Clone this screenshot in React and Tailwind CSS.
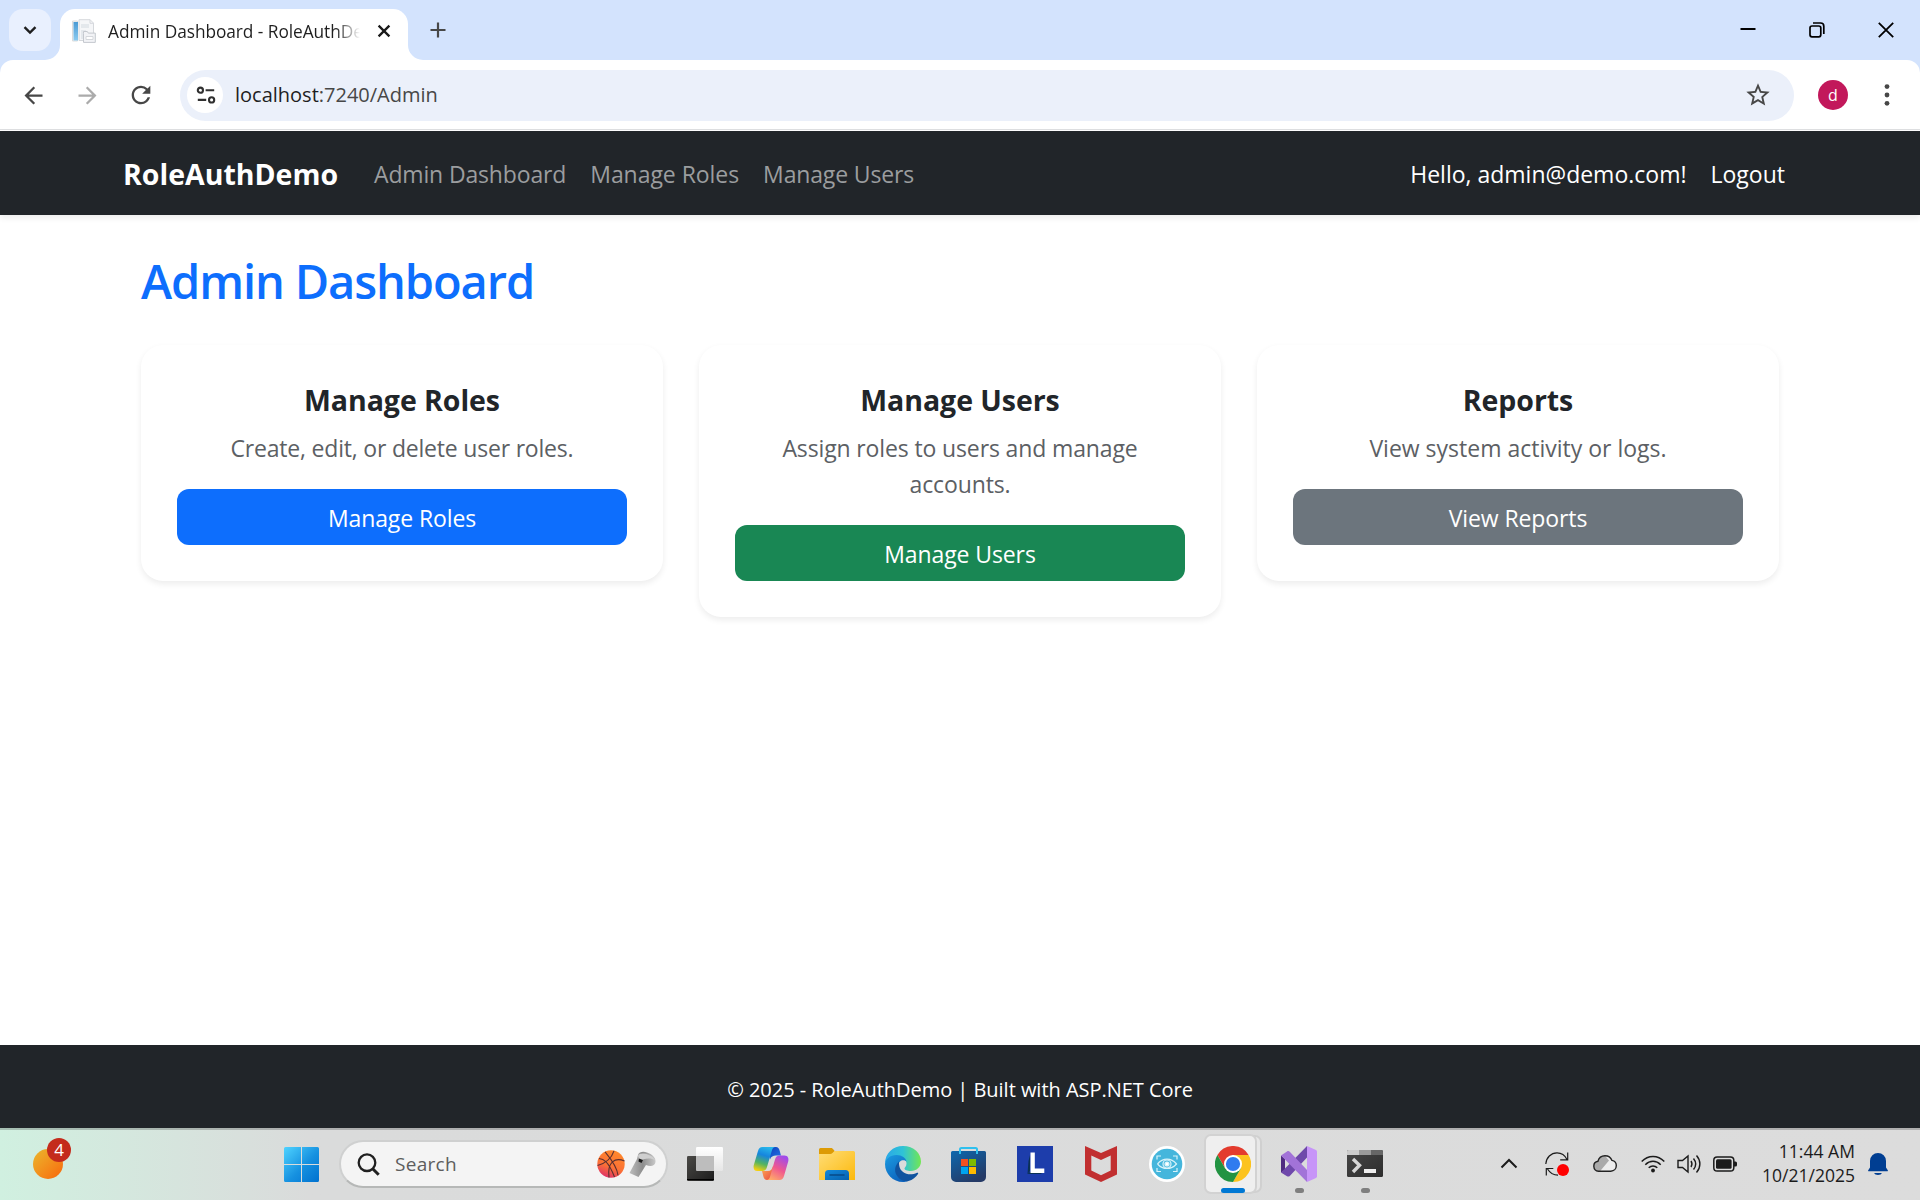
import { MdArrowBack, MdArrowForward, MdRefresh, MdStarBorder } from "react-icons/md";

function TabStrip() {
  return (
    <div className="flex h-[60px] shrink-0 items-start pl-[9px] pt-[9px]">
      <button className="flex size-[42px] items-center justify-center rounded-[14px] bg-[#e9f0fe]">
        <svg className="size-[14px]" viewBox="0 0 14 14" fill="none" stroke="#1f1f1f" strokeWidth="2.4">
          <path d="M1.5 4.2 7 9.5l5.5-5.3" />
        </svg>
      </button>
      <div className="relative ml-[9px] flex h-[51px] w-[348px] items-center rounded-t-[15px] bg-white pb-[8px] pl-[12px]">
        <svg className="absolute -left-[15px] bottom-0 size-[15px]" viewBox="0 0 15 15">
          <path d="M15 0v15H0A15 15 0 0 0 15 0" fill="#fff" />
        </svg>
        <svg className="absolute -right-[15px] bottom-0 size-[15px]" viewBox="0 0 15 15">
          <path d="M0 0v15h15A15 15 0 0 1 0 0" fill="#fff" />
        </svg>
        <Favicon />
        <span className="ml-[12px] w-[253px] overflow-hidden whitespace-nowrap bg-linear-to-r from-[#1f1f1f] from-[228px] to-transparent to-[252px] bg-clip-text pt-[3px] text-[17.3px] tracking-[-0.05px] text-transparent">
          Admin Dashboard - RoleAuthDe
        </span>
        <svg className="ml-[16px] size-[14px]" viewBox="0 0 14 14" stroke="#1a1a1a" strokeWidth="2.3">
          <path d="M1.6 1.6l10.8 10.8M12.4 1.6 1.6 12.4" />
        </svg>
      </div>
      <svg className="ml-[22px] mt-[13px] size-4" viewBox="0 0 16 16" stroke="#474747" strokeWidth="2.2">
        <path d="M8 .5v15M.5 8h15" />
      </svg>
      <div className="ml-auto mr-[26px] mt-[13px] flex items-center gap-[53px]">
        <svg className="size-4" viewBox="0 0 16 16" stroke="#000" strokeWidth="2">
          <path d="M.5 7h15" />
        </svg>
        <svg className="size-4" viewBox="0 0 16 16" fill="none" stroke="#000" strokeWidth="1.7">
          <rect x="1" y="4" width="10.800" height="10.800" rx="2" />
          <path d="M4 1h7.600a3.200 3.200 0 0 1 3.200 3.200V12" />
        </svg>
        <svg className="size-4" viewBox="0 0 16 16" stroke="#000" strokeWidth="1.8">
          <path d="M.8.8l14.400 14.400M15.200.8.8 15.200" />
        </svg>
      </div>
    </div>
  );
}

function Favicon() {
  return (
    <svg className="size-6 shrink-0" viewBox="0 0 24 24">
      <defs>
        <linearGradient id="fav" x1="0" y1="0" x2="0" y2="1">
          <stop offset="0" stopColor="#4a9ad4" />
          <stop offset="1" stopColor="#8ccbf0" />
        </linearGradient>
      </defs>
      <path d="M.5 2h5v20h-5z" fill="#f4f4f4" stroke="#dcdcdc" />
      <path d="M1.500 3h4.500V21.500h-4.500z" fill="url(#fav)" />
      <path d="M7 .7h11.100l3.400 3.400v17.400H7z" fill="#f5f6f8" stroke="#d5d8dc" />
      <path d="M18 .7v3.600h3.500" fill="none" stroke="#d5d8dc" />
      <path d="M9 5h8v4H9zM9 11h5v9H9z" fill="#e4e8ec" />
      <path d="M11.500 14.500v-2h3.800l1 1.600h7v9.300H11.500z" fill="#f2f3f6" stroke="#c4c8ce" />
      <path d="M14 17.500h7v3h-7z" fill="#fff" stroke="#d5d8dc" />
    </svg>
  );
}

function Toolbar() {
  return (
    <div className="flex h-[71px] shrink-0 items-center rounded-t-[13px] border-b border-b-white bg-white shadow-[inset_0_-1px_0_#dedfe1]">
      <MdArrowBack className="ml-[20px] size-[27px] text-[#474747]" />
      <MdArrowForward className="ml-[27px] size-[27px] text-[#ababab]" />
      <MdRefresh className="ml-[26px] size-[28px] text-[#474747]" />
      <div className="ml-[25px] flex h-[51px] w-[1614px] items-center rounded-full bg-[#ebf0fa] pl-[7px]">
        <span className="flex size-9 items-center justify-center rounded-full bg-white pl-px">
          <svg className="size-[20px]" viewBox="0 0 20 20" fill="none" stroke="#303030" strokeWidth="2.1">
            <circle cx="4.4" cy="5.2" r="2.6" />
            <path d="M9.600 5.200h8.600M1.800 14.900h8.400" />
            <circle cx="15.6" cy="14.9" r="2.6" />
          </svg>
        </span>
        <span className="ml-[12px] text-[20px] leading-6 text-[#474747]">
          <span className="text-[#1f1f1f]">localhost</span>:7240/Admin
        </span>
        <MdStarBorder className="ml-auto mr-[22px] size-[28px] text-[#474747]" />
      </div>
      <span className="ml-[24px] flex size-[30px] items-center justify-center rounded-full bg-[#c2185b] pb-[1px] text-[16px] text-white">
        d
      </span>
      <svg className="ml-[36px] h-6 w-[6px]" viewBox="0 0 6 24" fill="#474747">
        <circle cx="3" cy="3.6" r="2.4" />
        <circle cx="3" cy="12" r="2.4" />
        <circle cx="3" cy="20.3" r="2.4" />
      </svg>
    </div>
  );
}

function Navbar() {
  return (
    <nav className="z-10 flex h-[84px] shrink-0 items-center bg-[#212529] pl-[123px] pr-[135px] pt-[3px] text-[23px] text-white shadow-[0_3px_6px_rgba(0,0,0,0.075)]">
      <span className="w-[251px] text-[28.5px] font-bold">RoleAuthDemo</span>
      <div className="flex gap-6 text-[#9b9d9f]">
        <a className="tracking-[-0.15px]">Admin Dashboard</a>
        <a className="tracking-[-0.05px]">Manage Roles</a>
        <a className="tracking-[-0.15px]">Manage Users</a>
      </div>
      <div className="ml-auto flex gap-6">
        <span>Hello, admin@demo.com!</span>
        <a>Logout</a>
      </div>
    </nav>
  );
}

function Card({ title, text, textClass = "tracking-[-0.2px]", action, color }) {
  return (
    <div className="rounded-[22px] bg-white p-9 text-center text-[#212529] shadow-[0_3px_6px_rgba(0,0,0,0.075)]">
      <h5 className="mb-3 h-9 pt-[1px] text-[28.5px] font-bold leading-9 tracking-[-0.05px]">{title}</h5>
      <p className={`relative top-px mb-6 text-[23px] leading-9 text-[#5c6064] ${textClass}`}>{text}</p>
      <button className={`block h-14 w-full rounded-[12px] pt-[2px] text-[23px] leading-[54px] tracking-[-0.1px] text-white ${color}`}>
        {action}
      </button>
    </div>
  );
}

function Dashboard() {
  return (
    <main className="flex-1 px-[141px] pt-[36px]">
      <h1 className="mb-[36px] h-[58px] text-[47px] font-semibold leading-[60px] tracking-[-1.1px] text-[#0d6efd]">Admin Dashboard</h1>
      <div className="grid grid-cols-3 items-start gap-9">
        <Card title="Manage Roles" text="Create, edit, or delete user roles." action="Manage Roles" color="bg-[#0d6efd]" />
        <Card
          title="Manage Users"
          text="Assign roles to users and manage accounts."
          textClass="tracking-[-0.13px]"
          action="Manage Users"
          color="bg-[#198754]"
        />
        <Card title="Reports" text="View system activity or logs." textClass="tracking-normal" action="View Reports" color="bg-[#6c757d]" />
      </div>
    </main>
  );
}

function Start() {
  return (
    <svg className="size-[35px]" viewBox="0 0 35 35">
      <defs>
        <linearGradient id="win" x1="0" y1="0" x2="1" y2="1">
          <stop offset="0" stopColor="#4fd3ff" />
          <stop offset=".55" stopColor="#1691e0" />
          <stop offset="1" stopColor="#0071cf" />
        </linearGradient>
      </defs>
      <path d="M1.500 0H17v17H0V1.500A1.500 1.500 0 0 1 1.500 0M18 0h15.500A1.500 1.500 0 0 1 35 1.500V17H18zM0 18h17v17H1.500A1.500 1.500 0 0 1 0 33.500zM18 18h17v15.500a1.500 1.500 0 0 1-1.500 1.500H18z" fill="url(#win)" />
    </svg>
  );
}

function TaskView() {
  return (
    <svg className="size-9" viewBox="0 0 36 36">
      <defs>
        <linearGradient id="tvd" x1="0" y1="0" x2="1" y2="1">
          <stop offset="0" stopColor="#4a4946" />
          <stop offset="1" stopColor="#1c1c1c" />
        </linearGradient>
        <linearGradient id="tvl" x1="0" y1="0" x2="0" y2="1">
          <stop offset="0" stopColor="#fff" />
          <stop offset="1" stopColor="#e6e6e6" />
        </linearGradient>
      </defs>
      <rect x="9" y="1" width="27" height="24" rx="1.3" fill="url(#tvl)" />
      <rect x="0" y="10" width="27" height="25" rx="1.3" fill="url(#tvd)" />
      <path d="M9 10h18v15H10a1 1 0 0 1-1-1z" fill="#bdbdbd" />
      <path d="M0 33.500h27" stroke="#000" />
    </svg>
  );
}

function Copilot() {
  return (
    <svg className="size-9" viewBox="0 0 36 36">
      <defs>
        <linearGradient id="cpa" x1=".6" y1="0" x2=".3" y2="1">
          <stop offset="0" stopColor="#27b6ea" />
          <stop offset=".35" stopColor="#1685de" />
          <stop offset=".7" stopColor="#54b461" />
          <stop offset="1" stopColor="#f3cf10" />
        </linearGradient>
        <linearGradient id="cpb" x1=".7" y1="0" x2=".2" y2="1">
          <stop offset="0" stopColor="#a04bea" />
          <stop offset=".5" stopColor="#f0588f" />
          <stop offset="1" stopColor="#ffae67" />
        </linearGradient>
        <linearGradient id="cpc" x1="0" y1="0" x2="1" y2="1">
          <stop offset="0" stopColor="#0c3cba" />
          <stop offset="1" stopColor="#2577e8" />
        </linearGradient>
        <linearGradient id="cpd" x1="0" y1="0" x2="1" y2="1">
          <stop offset="0" stopColor="#ffb055" />
          <stop offset="1" stopColor="#e64040" />
        </linearGradient>
      </defs>
      <path d="M15 1h8c2 0 3 1.500 3.600 3.500L28 9.500h-5c-3 0-5 1-6 4z" fill="url(#cpc)" />
      <path d="M9 25h6c3 0 4-2 5-5l2 5-3.500 9H14c-2 0-3-1.500-3.600-3.500z" fill="url(#cpd)" />
      <path d="M9.500 1h13c-2 0-3 1.500-3.600 3.500L14 21c-.8 2.500-2 4-5 4H4.500C1 25 0 22 .8 19L5 5c.8-2.500 2-4 4.500-4" fill="url(#cpa)" />
      <path d="M26.500 34h-13c2 0 3-1.500 3.600-3.500L22 13.500c.8-2.500 2-4 5-4h4.500C35 9.500 36 12.500 35.200 15.500L31 30c-.8 2.500-2 4-4.500 4" fill="url(#cpb)" />
    </svg>
  );
}

function Explorer() {
  return (
    <svg className="size-9" viewBox="0 0 36 36">
      <defs>
        <linearGradient id="exf" x1="0" y1="0" x2="1" y2="1">
          <stop offset="0" stopColor="#ffdd77" />
          <stop offset="1" stopColor="#fcb90c" />
        </linearGradient>
        <linearGradient id="exb" x1="0" y1="0" x2="1" y2="1">
          <stop offset="0" stopColor="#1389dc" />
          <stop offset="1" stopColor="#0560ad" />
        </linearGradient>
      </defs>
      <path d="M0 3.500A1.500 1.500 0 0 1 1.500 2H12c1 0 1.500.5 2 1l2 2.500L12 9H0z" fill="#dd9b05" />
      <path d="M0 8h10c2 0 3-.5 4-1.500L15.500 5h19A1.500 1.500 0 0 1 36 6.500V34H0z" fill="url(#exf)" />
      <path d="M6 34v-6.500A3.500 3.500 0 0 1 9.500 24h17a3.500 3.500 0 0 1 3.500 3.500V34z" fill="url(#exb)" />
      <path d="M11 29h14" stroke="#074a87" strokeWidth="1.5" strokeLinecap="round" />
    </svg>
  );
}

function Edge() {
  return (
    <svg className="size-9" viewBox="0 0 36 36">
      <defs>
        <linearGradient id="edt" x1="0" y1=".5" x2="1" y2=".5">
          <stop offset="0" stopColor="#2aa7e8" />
          <stop offset=".5" stopColor="#2fc3d6" />
          <stop offset="1" stopColor="#72e753" />
        </linearGradient>
        <linearGradient id="edb" x1="0" y1="0" x2=".6" y2="1">
          <stop offset="0" stopColor="#1b9be0" />
          <stop offset="1" stopColor="#0d63bd" />
        </linearGradient>
      </defs>
      <path d="M0 18C0 7 8 0 18 0c11 0 18 7.500 18 15.500C36 21 31.500 25 26 25c-4 0-6.500-1-6.500-2.500 0-1 2-2 2-5 0-4-4-7.500-9-7.500C5.500 10 1 14 0 18" fill="url(#edt)" />
      <path d="M0 18c.5-5 5-9 11.500-9 5.500 0 9.500 3 10 6.500-2-2-5-1.500-6.500 0-3 3-3 8-1 12 2 3.500 5.500 6 9 7.500-2 .7-3.500 1-5 1C8 36 0 28 0 18" fill="url(#edb)" />
      <path d="M14 15.500c-4 4-5 9-2.500 13.500C14 33.500 19 36 23.500 35c4-1 7.500-4 9.500-7 .6-1-.2-1.700-1-1.200C24 30.500 15.500 27 14.300 20c-.3-1.500-.3-3-.3-4.500" fill="#10539f" />
    </svg>
  );
}

function Store() {
  return (
    <svg className="size-9" viewBox="0 0 36 36">
      <defs>
        <linearGradient id="sto" x1="0" y1="0" x2=".6" y2="1">
          <stop offset="0" stopColor="#0d68ae" />
          <stop offset="1" stopColor="#253a66" />
        </linearGradient>
      </defs>
      <path d="M0 6.500A1.500 1.500 0 0 1 1.500 5h32A1.500 1.500 0 0 1 35 6.500V31a5 5 0 0 1-5 5H5a5 5 0 0 1-5-5z" fill="url(#sto)" />
      <path d="M9 8V3a1.300 1.300 0 0 1 1.300-1.100h14.400A1.300 1.300 0 0 1 26 3v5" fill="none" stroke="#2fc0ee" strokeWidth="2" />
      <path d="M10 13h7v7h-7z" fill="#f25022" />
      <path d="M18 13h7v7h-7z" fill="#7fba00" />
      <path d="M10 21h7v7h-7z" fill="#00a4ef" />
      <path d="M18 21h7v7h-7z" fill="#ffb900" />
    </svg>
  );
}

function LApp() {
  return (
    <svg className="size-9" viewBox="0 0 36 36">
      <path d="M0 0h36v36H0z" fill="#1d3dab" />
      <path d="M13 9v16l-2.500 3L11.500 15zM10.500 28h13L27 26H13z" fill="#0a3155" />
      <path d="M13.500 6.500h4.300v16h9.500V27H13.500z" fill="#fff" />
    </svg>
  );
}

function McAfee() {
  return (
    <svg className="size-9" viewBox="0 0 36 36">
      <path fillRule="evenodd" d="M2 0l16 7L34 0v28.500L18 36 2 28.500zM8.300 9.500V24.500L18 29.300l9.700-4.800v-15L18 14z" fill="#c12f30" />
    </svg>
  );
}

function EyeApp() {
  return (
    <svg className="size-9" viewBox="0 0 36 36" fill="none" stroke="#d8f3fa" strokeWidth="1.2">
      <circle cx="18" cy="18" r="18" fill="#fff" stroke="none" />
      <circle cx="18" cy="18" r="15.3" fill="#45b6dc" stroke="none" />
      <path d="M8 13.500V10h4M24 10h4v3.500M28 22v3.500h-4M12 25.500H8V22" />
      <path d="M8.500 18c5.500-6.500 13.500-6.500 19 0-5.500 6-13.500 6-19 0" />
      <circle cx="18" cy="18" r="4" />
      <circle cx="18" cy="18" r="2" fill="#fff" />
    </svg>
  );
}

function Chrome() {
  return (
    <svg className="size-9" viewBox="0 0 36 36">
      <path d="M2.400 9A18 18 0 0 1 33.600 9H18l-7.800 13.500z" fill="#e33b2e" />
      <path d="M33.600 9A18 18 0 0 1 18 36l7.800-13.500L18 9z" fill="#fcc31e" />
      <path d="M2.400 9A18 18 0 0 0 18 36l7.800-13.500H10.200z" fill="#229342" />
      <circle cx="18" cy="18" r="9" fill="#fff" />
      <circle cx="18" cy="18" r="7.1" fill="#2f7bef" />
    </svg>
  );
}

function VisualStudio() {
  return (
    <svg className="size-9" viewBox="0 0 36 36">
      <path d="M0 9.500L4 13v11L0 26.500z" fill="#4f2b80" />
      <path d="M0 26.500L4 22.500 26 0v11.500L9 29.700c-1 1-2 1.200-3 .5z" fill="#6f49ab" />
      <path d="M0 9.500L6 5.500c1-.7 2-.5 3 .5l17 18v12L4 13.500z" fill="#a273d8" />
      <path d="M26 0l9 4c.7.400 1 1 1 1.800v24.400c0 .8-.3 1.400-1 1.800l-9 4z" fill="#c795f8" />
    </svg>
  );
}

function Terminal() {
  return (
    <svg className="size-9" viewBox="0 0 36 36">
      <defs>
        <linearGradient id="trm" x1="0" y1="0" x2="1" y2="1">
          <stop offset="0" stopColor="#474747" />
          <stop offset="1" stopColor="#2d2d2d" />
        </linearGradient>
      </defs>
      <rect y="4" width="36" height="27" rx="1.5" fill="url(#trm)" />
      <path d="M1.500 4H12v5H0V5.500A1.500 1.500 0 0 1 1.500 4" fill="#cbcbcb" />
      <path d="M12 4h12v5H12z" fill="#9a9a9a" />
      <path d="M24 4h10.500A1.500 1.500 0 0 1 36 5.500V9H24z" fill="#666" />
      <path d="M6 13l6.500 6.300L6 26" fill="none" stroke="#d6d6d6" strokeWidth="3.4" />
      <path d="M17 23h12v4H17z" fill="#eee" />
    </svg>
  );
}

const apps = [
  { Icon: TaskView }, { Icon: Copilot }, { Icon: Explorer }, { Icon: Edge }, { Icon: Store }, { Icon: LApp }, { Icon: McAfee }, { Icon: EyeApp },
  { Icon: Chrome, active: true }, { Icon: VisualStudio, running: true }, { Icon: Terminal, running: true },
];

function AppButton({ Icon, active, running }) {
  return (
    <div className="relative flex h-full w-[66px] items-center justify-center">
      {active && <span className="absolute left-[10px] top-[5px] h-[58px] w-[52px] rounded-[7px] border-2 border-[#d0d0d0] bg-[#e8e8e8]" />}
      {active && <span className="absolute left-[4px] top-[4px] h-[60px] w-[53px] rounded-[7px] border-2 border-[#d2d2d2] bg-[#efefef]" />}
      <span className="relative"><Icon /></span>
      {active && <span className="absolute bottom-[5px] left-[21px] h-[5px] w-6 rounded-full bg-[#0078d4]" />}
      {running && <span className="absolute bottom-[5px] left-[29px] h-[5px] w-[9px] rounded-full bg-[#7f7f7f]" />}
    </div>
  );
}

function Weather() {
  return (
    <div className="w-[268px] pl-[33px]">
      <div className="relative size-[30px] rounded-full bg-linear-to-br from-[#e9b62c] to-[#f7650a]">
        <span className="absolute -top-[11px] left-[14px] flex size-6 items-center justify-center rounded-full bg-[#c42b1c] text-[17px] text-white">4</span>
      </div>
    </div>
  );
}

function SearchBox() {
  return (
    <div className="ml-[5px] mr-[4px] flex h-[48px] w-[329px] items-center rounded-full border-2 border-[#cfd0d0] border-b-[#b6b8b7] bg-[#f4f4f4] pl-[16px] pr-[10px]">
      <svg className="size-[23px]" viewBox="0 0 23 23" fill="none" stroke="#202020" strokeWidth="2.3">
        <circle cx="10" cy="9.7" r="8.3" />
        <path d="M15.700 15.700l6 6" strokeWidth="3" />
      </svg>
      <span className="ml-[15px] text-[19px] tracking-[0.3px] text-[#5d5d5d]">Search</span>
      <svg className="ml-auto size-[28px]" viewBox="0 0 28 28" fill="none" stroke="#5c3030" strokeWidth="1.1">
        <defs>
          <linearGradient id="bsk" x1=".7" y1="0" x2=".3" y2="1">
            <stop offset="0" stopColor="#ff8a2b" />
            <stop offset=".6" stopColor="#fb7036" />
            <stop offset="1" stopColor="#dd2f6b" />
          </linearGradient>
        </defs>
        <circle cx="14" cy="14" r="13.7" fill="url(#bsk)" stroke="none" />
        <path d="M8 1.800c5 6 12 14 13 23.500M2 8.500c4 .5 9 1.500 15.500 18.500M.5 15.500C9 13 15 7 17 .8M27.500 11C18 7 10 12 12 27.500" />
      </svg>
      <svg className="ml-[4px] size-[27px]" viewBox="0 0 27 27">
        <defs>
          <linearGradient id="whi" x1="0" y1="0" x2="1" y2="0">
            <stop offset="0" stopColor="#bdbdbd" />
            <stop offset=".5" stopColor="#8d8d8d" />
            <stop offset="1" stopColor="#c9c9c9" />
          </linearGradient>
        </defs>
        <path d="M9 4c1-3 5-4 9-2.500 5 1.500 9 5 8.500 9.500-.4 4-5 5-9.500 3L9.500 26 .5 22 8 8z" fill="url(#whi)" />
        <path d="M9 5c1-3 6-3 10-1.500 4 1.600 7 4 7 6-4-3.500-12-2-15 1z" fill="#cfcfcf" />
        <path d="M10 7.500l4 1.500-1.500 3-3-1.500z" fill="#181818" />
      </svg>
    </div>
  );
}

function Tray() {
  return (
    <div className="ml-auto mr-[30px] flex items-center text-[#1b1b1b]">
      <svg className="size-6" viewBox="0 0 24 24" fill="none" stroke="currentColor" strokeWidth="2">
        <path d="M4.500 15.500 12 8l7.500 7.500" />
      </svg>
      <svg className="ml-6 size-6" viewBox="0 0 24 24" fill="none" stroke="currentColor" strokeWidth="1.2">
        <path d="M.8 12C1.200 5.500 6 .8 12 .8c4.500 0 8 2.500 10 6.700M22.700.5v7.300h-7.500M1.300 23.500v-7h7M2.500 17c2.500 4 6 6.200 10.500 6.200" />
        <circle cx="18" cy="18" r="6" fill="#f00" stroke="none" />
      </svg>
      <svg className="ml-6 size-6" viewBox="0 0 24 24">
        <path d="M5.500 19.200a5 5 0 0 1-.6-9.900C5.800 5.800 8.500 3.700 12 3.700c3.200 0 5.800 1.700 7 4.700 2.700.6 4.300 2.700 4.300 5.200 0 3.200-2.400 5.600-5.500 5.600z" fill="#ededed" />
        <path d="M5.500 19.200a5 5 0 0 1-.6-9.900C5.800 5.800 8.500 3.700 12 3.700l4 4.700L7 19.200z" fill="#aaa" />
        <path d="M5.500 19.200a5 5 0 0 1-.6-9.900C5.800 5.800 8.500 3.700 12 3.700c3.200 0 5.800 1.700 7 4.700 2.700.6 4.300 2.700 4.300 5.200 0 3.200-2.400 5.600-5.500 5.600z" fill="none" stroke="#222" strokeWidth="1.4" />
      </svg>
      <svg className="ml-6 size-6" viewBox="0 0 24 24" fill="none" stroke="currentColor" strokeWidth="1.5">
        <path d="M.7 9.500c6.500-6.600 16.100-6.600 22.600 0M4.300 12.700c4.500-4.500 10.900-4.500 15.400 0M7.700 15.800c2.500-2.500 6.100-2.500 8.600 0" />
        <circle cx="12" cy="18.5" r="1.9" fill="currentColor" stroke="none" />
      </svg>
      <svg className="ml-3 size-6" viewBox="0 0 24 24" fill="none" stroke="currentColor" strokeWidth="1.4">
        <path d="M1 8.500h4.500L11 4v16l-5.500-4.500H1z" />
        <path d="M14 9c1.300 2 1.300 4 0 6M16.500 6.500c2.800 3.500 2.800 7.500 0 11M19.500 3.500c4.500 5 4.500 12 0 17" />
      </svg>
      <svg className="ml-3 size-6" viewBox="0 0 24 24">
        <rect x=".8" y="5" width="20" height="14" rx="3.3" fill="none" stroke="currentColor" strokeWidth="1.5" />
        <rect x="3" y="7.2" width="15.6" height="9.6" rx="1.5" fill="currentColor" />
        <path d="M21 9.500h1.500A1.500 1.500 0 0 1 24 11v2a1.500 1.500 0 0 1-1.500 1.500H21z" fill="currentColor" />
      </svg>
      <div className="w-[118px] pb-[2px] text-right text-[17.5px] leading-6">
        <div className="tracking-[0.05px]">11:44 AM</div>
        <div>10/21/2025</div>
      </div>
      <svg className="ml-[11px] size-6" viewBox="0 0 24 24" fill="#003e92">
        <path d="M4 9a8 8 0 0 1 16 0v6.500l1.800 2.800c.3.600 0 1-.6 1H2.800c-.6 0-.9-.4-.6-1L4 15.500zM8 21h8a4.200 3 0 0 1-8 0" />
      </svg>
    </div>
  );
}

function Taskbar() {
  return (
    <div className="flex h-[72px] shrink-0 items-center border-t-2 border-black/20 bg-linear-to-r from-[#d0f0e0] via-[#dadbdb] via-[310px] to-[#dcdcdc] pb-[2px]">
      <Weather />
      <div className="flex w-[66px] justify-center"><Start /></div>
      <SearchBox />
      <div className="flex h-full">
        {apps.map((a, i) => <AppButton key={i} {...a} />)}
      </div>
      <Tray />
    </div>
  );
}

export default function App() {
  return (
    <div className="flex h-[1200px] w-[1920px] flex-col overflow-hidden bg-[#d3e3fd] font-['Open_Sans',sans-serif]">
      <TabStrip />
      <Toolbar />
      <Navbar />
      <div className="flex flex-1 flex-col bg-white">
        <Dashboard />
        <footer className="flex h-[83px] items-center justify-center bg-[#212529] pt-[6px] text-[20px] tracking-[-0.03px] text-white">
          © 2025 - RoleAuthDemo | Built with ASP.NET Core
        </footer>
      </div>
      <Taskbar />
    </div>
  );
}
